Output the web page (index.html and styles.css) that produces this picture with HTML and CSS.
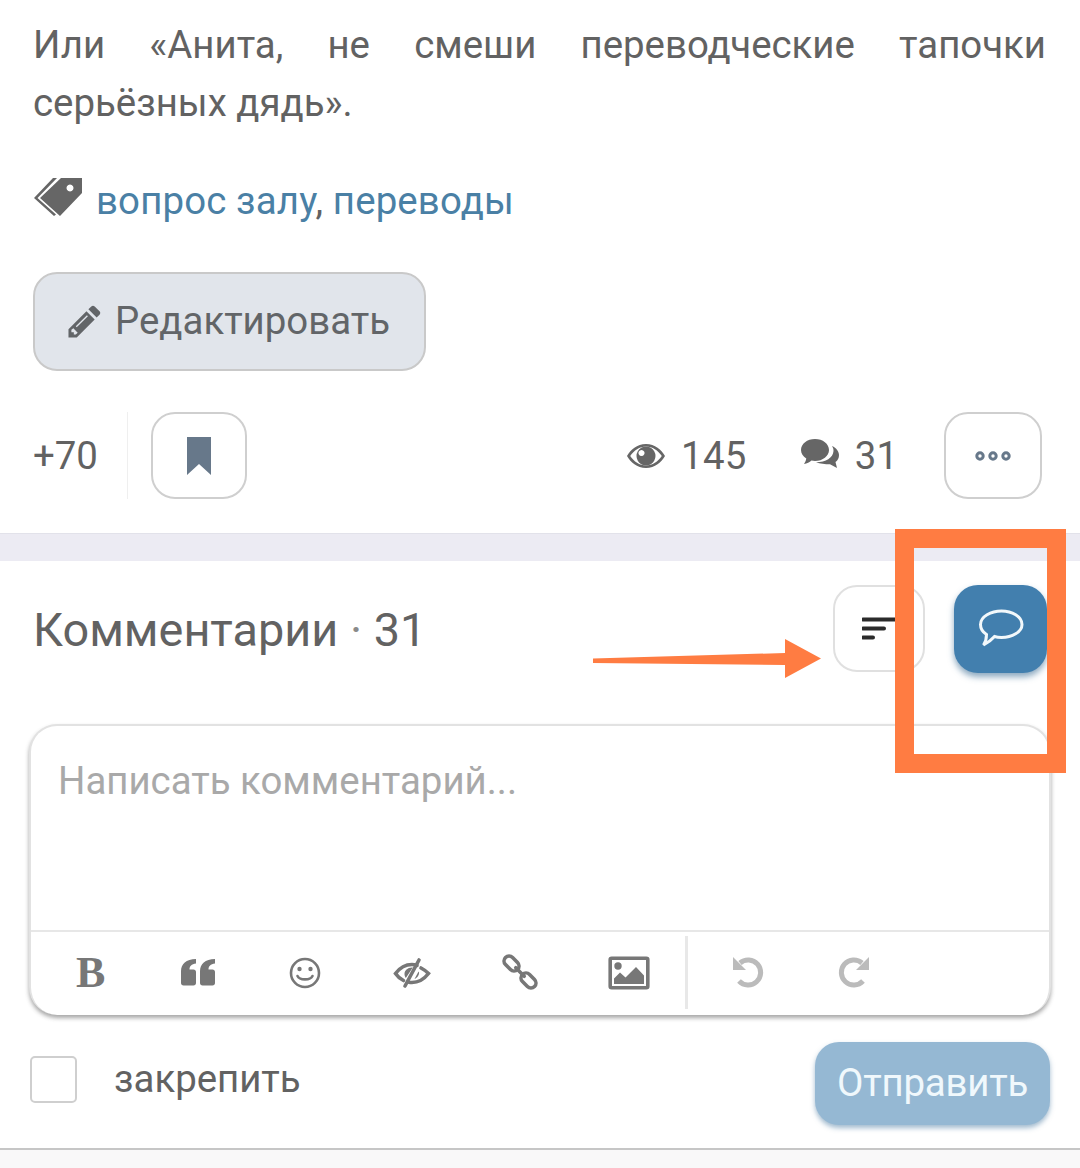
FILE: index.html
```html
<!DOCTYPE html>
<html lang="ru">
<head>
<meta charset="utf-8">
<title>Комментарии</title>
<link rel="stylesheet" href="styles.css">
</head>
<body>
<main class="page">
  <section class="post">
    <p class="post-text">Или «Анита, не смеши переводческие тапочки серьёзных дядь».</p>
    <div class="tags">
      <svg class="tag-icon" viewBox="0 0 49 39"><path d="M28 1H49V16L27 39L7 21Z M37 7.500a3.500 3.500 0 1 0 .01 0Z" fill-rule="evenodd"/><path d="M20 1H24L4.500 21L23 37.500L21 39L1 21Z"/></svg>
      <span class="tag-list"><a class="tag">вопрос залу</a>, <a class="tag">переводы</a></span>
    </div>
    <button class="edit-btn">
      <svg class="pencil" viewBox="0 0 34 34"><path d="M0.500 33.500V25L19 6.500L27.500 15L9 33.500Z M3.500 25.500V28H6V30.500H8L10 28.500L5.500 24Z M19.500 10.500L8 22L9 23L20.500 11.500Z" fill-rule="evenodd"/><path d="M21 4.500L24 1.500C25 .5 26.500 .5 27.500 1.500L32.500 6.500C33.500 7.500 33.500 9 32.500 10L29.500 13Z"/></svg>
      <span class="edit-label">Редактировать</span>
    </button>
    <div class="stats">
      <span class="score">+70</span>
      <span class="stats-sep"></span>
      <button class="icon-btn bookmark-btn">
        <svg class="bookmark" viewBox="0 0 26 38"><path d="M1 0H25V38L13 27L1 38Z"/></svg>
      </button>
      <span class="stat stat-views">
        <svg class="eye" viewBox="0 0 40 26"><path d="M20 1C11 1 4.500 7 1 13C4.500 19 11 25 20 25C29 25 35.500 19 39 13C35.500 7 29 1 20 1Z M20 3.500C26.500 3.500 32 7.500 35.800 13C32 18.500 26.500 22.500 20 22.500C13.500 22.500 8 18.500 4.200 13C8 7.500 13.500 3.500 20 3.500Z" fill-rule="evenodd"/><path d="M20 3.500a9.500 9.500 0 1 1-.01 0Z M15.500 7a3 3 0 1 0 .01 0Z" fill-rule="evenodd"/></svg>
        145
      </span>
      <span class="stat stat-comments">
        <svg class="chat" viewBox="0 0 40 32"><path d="M15 1C22.800 1 29 5.800 29 12C29 18 22.800 23 15 23C13.800 23 12.600 22.900 11.500 22.600C9.500 24.300 7 25.500 4 26C5 24.500 6 22.800 6.300 20.500C3 18.500 1 15.500 1 12C1 5.800 7.200 1 15 1Z"/><path d="M32 8C36.500 10 39 13.500 39 17C39 20 37.800 22.500 35.500 24L37 30L30 26.300C25 26.300 20 25.500 16 24.200C26 24.200 33 20 33.500 13C33.500 11 33 9.500 32 8Z"/></svg>
        31
      </span>
      <button class="icon-btn more-btn">
        <svg class="dots" viewBox="0 0 36 10"><circle cx="5" cy="5" r="3.200"/><circle cx="18" cy="5" r="3.200"/><circle cx="31" cy="5" r="3.200"/></svg>
      </button>
    </div>
  </section>

  <div class="band"></div>

  <section class="comments">
    <div class="comments-head">
      <h2 class="comments-title">Комментарии <span class="dot">·</span> 31</h2>
      <button class="icon-btn sort-btn">
        <svg class="sort" viewBox="0 0 34 24"><path d="M1 2.500H33M1 11.500H22M1 20.500H11"/></svg>
      </button>
      <button class="reply-btn">
        <svg class="bubble" viewBox="0 0 46 38"><path d="M23.500 2C34 2 44 7.500 44 15.500C44 23 34 28.500 23.500 28.500C21 28.500 18.500 28.200 16.500 27.500C13.500 31 10 33.500 5.500 36C7.500 33 8.500 29.500 8.500 25.500C4.500 23 2.500 19.500 2.500 15.500C2.500 7.500 13 2 23.500 2Z"/></svg>
      </button>
    </div>

    <div class="editor">
      <div class="editor-input">Написать комментарий...</div>
      <div class="toolbar">
        <span class="tool tool-bold">B</span>
        <svg class="tool tool-quote" viewBox="0 0 34 28"><path d="M15 1V5.500C10.500 6 8.500 8 8.500 11.500H12.500C14 11.500 15 12.500 15 14V25C15 26.500 14 27.500 12.500 27.500H2.500C1 27.500 0 26.500 0 25V13C0 6 5 1 15 1Z M34 1V5.500C29.500 6 27.500 8 27.500 11.500H31.500C33 11.500 34 12.500 34 14V25C34 26.500 33 27.500 31.500 27.500H21.500C20 27.500 19 26.500 19 25V13C19 6 24 1 34 1Z"/></svg>
        <svg class="tool tool-smile" viewBox="0 0 32 32"><circle class="line" cx="16" cy="16" r="14"/><circle cx="10.500" cy="12" r="2.200"/><circle cx="21.500" cy="12" r="2.200"/><path class="line" d="M8.500 19C10.500 23.500 21.500 23.500 23.500 19"/></svg>
        <svg class="tool tool-hide" viewBox="0 0 38 30"><path class="line thick" d="M24 7.500C21.800 6.800 20 6.500 19 6.500C11.500 6.500 5.500 11.500 2.500 15.500C4.500 18.500 7.500 21 10.500 22.500M28 10C31.500 11.800 34 14 35.500 15.500C32 20 26 24.500 19 24.500C18 24.500 17 24.400 16 24.200"/><path class="line thick" d="M26 2L12 28"/><path d="M19 9.500C14.500 9.500 11.500 12.500 11.500 16C11.500 17.500 12 18.800 12.800 20L19.800 9.600Z M26 13.500C26.500 16.800 24.500 20 21.500 21L25 14.500Z"/></svg>
        <svg class="tool tool-link" viewBox="0 0 34 34"><g transform="rotate(45 17 17)"><rect class="line thick" x="-3.500" y="12" width="17" height="10" rx="5"/><rect class="line thick" x="20.500" y="12" width="17" height="10" rx="5"/><path class="line thick" d="M11 17H23"/></g></svg>
        <svg class="tool tool-image" viewBox="0 0 40 32"><rect class="line thick" x="1.200" y="1.200" width="37.600" height="29.600" rx="1.500"/><circle cx="9" cy="9" r="3.700"/><path d="M5 27V21.500L11 15.500L16.500 20.500L27 10L35 18.500V27Z"/></svg>
        <span class="tool-sep"></span>
        <svg class="tool tool-undo" viewBox="0 0 32 32"><path class="line wide" d="M9 7A12.500 12.500 0 1 1 8 25"/><path d="M2 1V14H15Z"/></svg>
        <svg class="tool tool-redo" viewBox="0 0 32 32"><path class="line wide" d="M23 7A12.500 12.500 0 1 0 24 25"/><path d="M30 1V14H17Z"/></svg>
      </div>
    </div>

    <div class="form-foot">
      <label class="pin">
        <span class="checkbox"></span>
        <span class="pin-label">закрепить</span>
      </label>
      <button class="send-btn">Отправить</button>
    </div>
  </section>

  <div class="page-foot"></div>

  <svg class="arrow" viewBox="0 0 232 40"><path d="M2 20.500L194 15V1L230 20.500L194 40V27L2 25Z"/></svg>
  <div class="highlight"></div>
</main>
</body>
</html>
```
FILE: styles.css
```css
* { box-sizing: border-box; }

html, body {
  margin: 0;
  padding: 0;
  background: #fff;
}

body {
  font-family: Roboto, "Liberation Sans", sans-serif;
  color: #626262;
}

button {
  font-family: inherit;
  padding: 0;
  cursor: pointer;
}

.page {
  position: relative;
  width: 1080px;
  height: 1168px;
  overflow: hidden;
  background: #fff;
  display: flex;
  flex-direction: column;
}

.post {
  height: 533px;
  padding: 16px 34px 0 33px;
  flex: none;
}

.post-text {
  margin: 0;
  font-size: 38.400px;
  line-height: 57.500px;
  text-align: justify;
}

.tags {
  display: flex;
  align-items: center;
  height: 40px;
  margin-top: 50px;
}

.tag-icon {
  width: 49px;
  height: 39px;
  fill: #666;
  margin-top: -9px;
  flex: none;
}

.tag-list {
  margin-left: 14px;
  font-size: 38.400px;
  line-height: 40px;
  letter-spacing: .15px;
}

.tag { color: #4a80a5; }

.edit-btn {
  display: flex;
  align-items: center;
  width: 393px;
  height: 99px;
  margin-top: 51px;
  padding-left: 33px;
  font-size: 38.400px;
  color: #626568;
  background: #e1e5eb;
  border: 2px solid #c9c9c9;
  border-radius: 24px;
}

.edit-label { margin-top: -2px; }

.pencil {
  width: 33px;
  height: 33px;
  fill: #626568;
  margin-right: 14px;
}

.stats {
  display: flex;
  align-items: center;
  height: 87px;
  margin-top: 41px;
  font-size: 38.400px;
}

.score { width: 94px; }

.stats-sep {
  width: 1px;
  height: 87px;
  background: #efefef;
}

.icon-btn {
  display: flex;
  align-items: center;
  justify-content: center;
  background: #fff;
  border: 2px solid #cfcfcf;
  border-radius: 24px;
}

.bookmark-btn {
  width: 96px;
  height: 87px;
  margin-left: 23px;
}

.bookmark {
  width: 26px;
  height: 38px;
  fill: #67788a;
}

.stat {
  display: flex;
  align-items: center;
  letter-spacing: .3px;
}

.stat-views { margin-left: 379px; }

.eye {
  width: 40px;
  height: 26px;
  fill: #666;
  margin-right: 15px;
}

.stat-comments { margin-left: 53px; }

.chat {
  width: 40px;
  height: 32px;
  fill: #666;
  margin-right: 15px;
  margin-top: -4px;
}

.more-btn {
  width: 98px;
  height: 87px;
  margin-left: 46px;
}

.dots {
  width: 36px;
  height: 10px;
  fill: none;
  stroke: #67788a;
  stroke-width: 3;
}

.band {
  flex: none;
  height: 28px;
  background: #ecebf3;
  border-top: 1px solid #e2e2ea;
}

.comments {
  flex: 1;
  padding: 24px 29px 0;
}

.comments-head {
  display: flex;
  align-items: center;
  height: 87px;
  padding: 0 4px;
}

.comments-title {
  flex: 1;
  margin: 2px 0 0;
  font-size: 46.800px;
  font-weight: 400;
  color: #626262;
}

.dot { color: #8a8a8a; }

.sort-btn {
  width: 92px;
  height: 87px;
  border-color: #e0e0e0;
}

.sort {
  width: 34px;
  height: 24px;
  fill: none;
  stroke: #2b2b2b;
  stroke-width: 4;
  stroke-linecap: round;
}

.reply-btn {
  display: flex;
  align-items: center;
  justify-content: center;
  width: 93px;
  height: 88px;
  margin-left: 29px;
  background: #427fae;
  border: 0;
  border-radius: 24px;
  box-shadow: 0 4px 6px rgba(46, 98, 140, .55);
}

.bubble {
  width: 46px;
  height: 38px;
  fill: none;
  stroke: #f2f8fb;
  stroke-width: 3;
  margin-top: -2px;
}

.editor {
  height: 291px;
  margin-top: 52px;
  background: #fff;
  border: 2px solid #e2e2e2;
  border-bottom: 0;
  border-radius: 28px;
  box-shadow: 0 3px 4px rgba(60, 60, 60, .45);
  display: flex;
  flex-direction: column;
}

.editor-input {
  height: 206px;
  padding: 33px 27px 0;
  font-size: 38.400px;
  line-height: 44px;
  color: #a9a9a9;
  border-bottom: 2px solid #e7e7e7;
}

.toolbar {
  display: flex;
  align-items: center;
  flex: 1;
  fill: #777;
  position: relative;
}

.tool {
  position: absolute;
  color: #777;
  fill: #777;
  overflow: visible;
}

.line {
  fill: none;
  stroke: #777;
  stroke-width: 2.600;
  stroke-linecap: round;
}

.thick { stroke-width: 3.600; }
.wide { stroke-width: 5; stroke-linecap: butt; }

.tool-bold {
  left: 45px;
  top: 13px;
  font: 700 44px/56px "Liberation Serif", serif;
}

.tool-quote { left: 150px; width: 34px; height: 28px; top: 26px; }
.tool-smile { left: 258px; width: 32px; height: 32px; top: 25px; }
.tool-hide { left: 362px; width: 38px; height: 30px; top: 26px; }
.tool-link { left: 472px; width: 34px; height: 34px; top: 23px; }
.tool-image { left: 578px; width: 40px; height: 32px; top: 25px; }

.tool-sep {
  position: absolute;
  left: 654px;
  top: 4px;
  width: 3px;
  height: 73px;
  background: #e8e8e8;
}

.tool-undo { left: 700px; width: 32px; height: 32px; top: 24px; fill: #bbb; }
.tool-redo { left: 808px; width: 32px; height: 32px; top: 24px; fill: #bbb; }
.tool-undo .line, .tool-redo .line { stroke: #bbb; }

.form-foot {
  display: flex;
  justify-content: space-between;
  align-items: flex-start;
  margin-top: 27px;
  padding-right: 1px;
}

.pin {
  display: flex;
  align-items: center;
  margin-top: 14px;
  margin-left: 1px;
  font-size: 38.400px;
  color: #626262;
}

.pin-label { margin-top: -2px; }

.checkbox {
  width: 47px;
  height: 47px;
  margin-right: 37px;
  border: 2px solid #cfcfcf;
  border-radius: 5px;
}

.send-btn {
  width: 235px;
  height: 83px;
  padding-bottom: 2px;
  font-size: 38.400px;
  letter-spacing: -.2px;
  color: #f0f8fc;
  background: #95b8d3;
  border: 0;
  border-radius: 24px;
  box-shadow: 0 3px 5px rgba(70, 120, 160, .5);
}

.page-foot {
  flex: none;
  height: 20px;
  background: #f9f8f9;
  border-top: 2px solid #c6c6c6;
}

.arrow {
  position: absolute;
  left: 591px;
  top: 638px;
  width: 232px;
  height: 40px;
  fill: #ff7c42;
}

.highlight {
  position: absolute;
  left: 895px;
  top: 529px;
  width: 171px;
  height: 244px;
  border: 19.500px solid #ff7c42;
}
```
